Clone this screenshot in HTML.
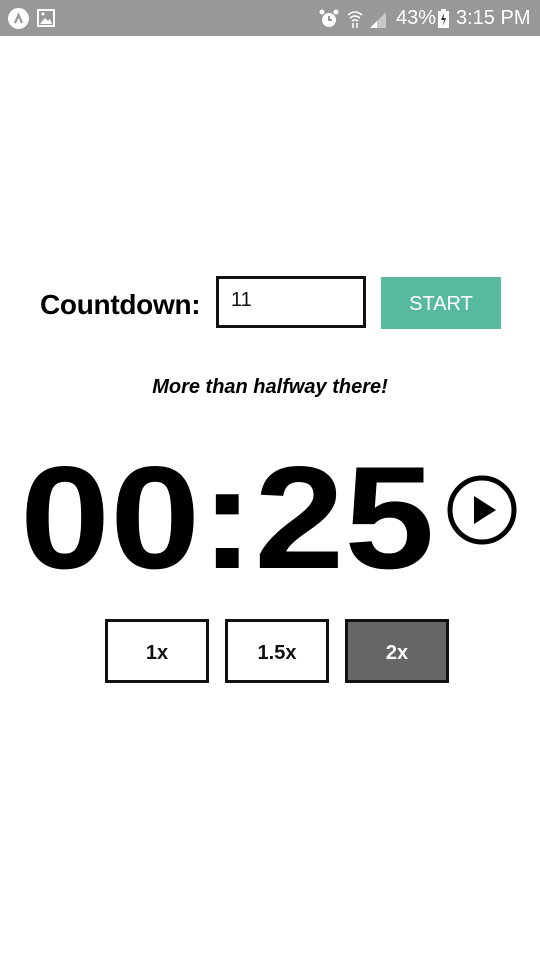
<!DOCTYPE html>
<html><head><style>
body{margin:0;width:540px;height:960px;background:#fff;font-family:"Liberation Sans",sans-serif;position:relative;overflow:hidden}
.sb{position:absolute;left:0;top:0;width:540px;height:36px;background:#989898;color:#fff}
.abs{position:absolute}
.btn{position:absolute;top:619px;width:98px;height:58px;border:3px solid #111;text-align:center;line-height:62px;font-weight:bold;font-size:20px;color:#111}
</style></head><body>
<div class="sb">
<div class="abs" style="left:8px;top:8px;width:21px;height:21px;border-radius:50%;background:#fff"></div>
<svg class="abs" style="left:12px;top:12px" width="13" height="13"><path d="M3 11 L6.5 3 L10 11" stroke="#989898" stroke-width="2.2" fill="none"/></svg>
<svg class="abs" style="left:37px;top:9px" width="18" height="18"><rect x="1" y="1" width="16" height="16" fill="none" stroke="#fff" stroke-width="2"/><path d="M3 15 L8 9 L11 12 L13 10 L15 15Z" fill="#fff"/><circle cx="6" cy="5" r="1.5" fill="#fff"/></svg>
<svg class="abs" style="left:318px;top:8px" width="22" height="22"><circle cx="11" cy="12" r="7" fill="#fff"/><path d="M11 8v4h3" stroke="#989898" stroke-width="2" fill="none"/><circle cx="4" cy="4" r="2.5" fill="#fff"/><circle cx="18" cy="4" r="2.5" fill="#fff"/></svg>
<svg class="abs" style="left:346px;top:9px" width="18" height="20"><path d="M2 6 Q9 0 16 6 M4 9 Q9 5 14 9 M6 12 Q9 10 12 12" stroke="#fff" stroke-width="1.5" fill="none"/><path d="M7 14v5 M11 14v5" stroke="#fff" stroke-width="1.5"/></svg>
<svg class="abs" style="left:368px;top:10px" width="20" height="18"><path d="M2 18 L18 2 L18 18Z" fill="#c8c8c8"/><path d="M2 18 L9 11 L9 18Z" fill="#fff"/></svg>
<div class="abs" style="left:396px;top:7px;font-size:20px">43%</div>
<svg class="abs" style="left:438px;top:9px" width="11" height="19"><rect x="0" y="2" width="11" height="17" fill="#fff"/><rect x="3" y="0" width="5" height="3" fill="#fff"/><path d="M6 4 L3 11 H6 L5 17 L8 9 H5.5Z" fill="#333"/></svg>
<div class="abs" style="left:456px;top:7px;font-size:20px">3:15 PM</div>
</div>
<div class="abs" style="left:40px;top:289px;font-size:28px;font-weight:bold;color:#000;letter-spacing:-0.3px">Countdown:</div>
<div class="abs" style="left:216px;top:276px;width:144px;height:46px;border:3px solid #111"></div>
<div class="abs" style="left:231px;top:289px;font-size:20px;color:#111">11</div>
<div class="abs" style="left:381px;top:277px;width:120px;height:52px;background:#57ba9e;color:#fff;font-size:20px;text-align:center;line-height:54px">START</div>
<div class="abs" style="left:0;width:540px;top:376px;text-align:center;font-size:20px;font-weight:bold;font-style:italic">More than halfway there!</div>
<div class="abs" style="left:20px;top:445px;font-size:146px;font-weight:bold;color:#000;line-height:146px;transform:scaleX(1.11);transform-origin:0 0;white-space:nowrap">00:25</div>
<svg class="abs" style="left:446px;top:474px" width="72" height="72"><circle cx="36" cy="36" r="32" fill="none" stroke="#000" stroke-width="5"/><path d="M28 22 L50 36 L28 50Z" fill="#000"/></svg>
<div class="btn" style="left:105px">1x</div>
<div class="btn" style="left:225px">1.5x</div>
<div class="btn" style="left:345px;background:#666;color:#fff">2x</div>
</body></html>
